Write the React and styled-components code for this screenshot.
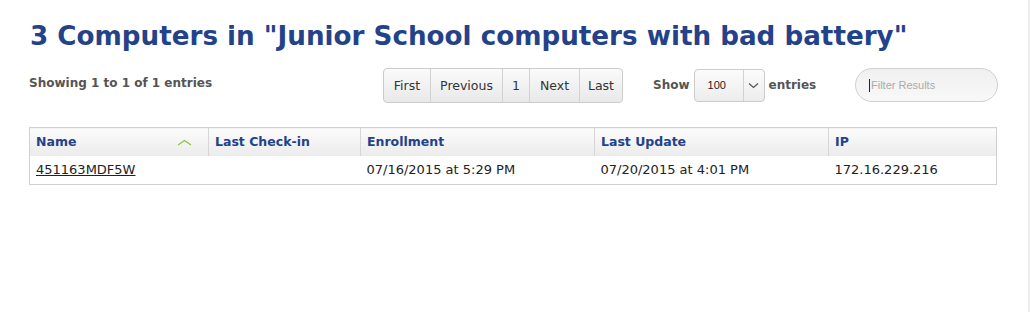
import React from 'react';
import styled, { createGlobalStyle } from 'styled-components';

const GlobalStyle = createGlobalStyle`
  html, body {
    margin: 0;
    padding: 0;
    background: #fff;
  }
  body {
    font-family: "DejaVu Sans", Verdana, sans-serif;
  }
`;

const Page = styled.div`
  box-sizing: border-box;
  width: 1030px;
  height: 312px;
  padding: 19px 30px 0 29px;
  border-right: 2px solid #ececec;
`;

const Title = styled.h1`
  margin: 0 0 0 1px;
  font-size: 26.2px;
  line-height: 34px;
  font-weight: bold;
  color: #24428a;
  white-space: nowrap;
`;

const Toolbar = styled.div`
  display: flex;
  align-items: center;
  margin-top: 15px;
  height: 34px;
`;

const Info = styled.div`
  font-size: 12px;
  font-weight: bold;
  color: #555;
  margin-top: -4px;
  width: 354px;
  white-space: nowrap;
`;

const Pager = styled.div`
  display: flex;
  height: 33px;
  border: 1px solid #ccc;
  border-radius: 4px;
  overflow: hidden;
  background: linear-gradient(#fafafa, #e9e9e9);
`;

const PageButton = styled.button`
  border: none;
  border-left: ${(p) => (p.$first ? 'none' : '1px solid #d2d2d2')};
  background: transparent;
  padding: 0;
  width: ${(p) => p.$w}px;
  font-family: "DejaVu Sans", Verdana, sans-serif;
  font-size: 12.5px;
  color: #333;
  cursor: pointer;
`;

const Label = styled.span`
  font-size: 12px;
  font-weight: bold;
  color: #555;
  margin: ${(p) => p.$m};
`;

const Select = styled.div`
  display: flex;
  height: 33px;
  width: 71px;
  border: 1px solid #ccc;
  border-radius: 4px;
  background: linear-gradient(#fcfcfc, #ececec);
  box-sizing: border-box;
`;

const SelectValue = styled.div`
  flex: 1;
  display: flex;
  align-items: center;
  padding-left: 13px;
  font-family: "Liberation Sans", Arial, sans-serif;
  font-size: 11px;
  color: #222;
`;

const SelectArrow = styled.div`
  width: 20px;
  border-left: 1px solid #d2d2d2;
  display: flex;
  align-items: center;
  justify-content: center;
`;

const Filter = styled.div`
  margin-left: auto;
  width: 143px;
  height: 34px;
  box-sizing: border-box;
  border: 1px solid #d0d0d0;
  border-radius: 17px;
  background: linear-gradient(#f0f0f0, #f8f8f8);
  display: flex;
  align-items: center;
  padding-left: 13px;
  font-family: "Liberation Sans", Arial, sans-serif;
  font-size: 11px;
  color: #aaa;
`;

const Caret = styled.span`
  display: inline-block;
  width: 1px;
  height: 13px;
  background: #222;
  margin-right: 1px;
`;

const Table = styled.table`
  margin-top: 25px;
  width: 968px;
  border-collapse: collapse;
  border: 1px solid #d0d0d0;
`;

const Th = styled.th`
  position: relative;
  text-align: left;
  height: 28px;
  padding: 0 6px;
  font-size: 12.5px;
  font-weight: bold;
  color: #24428a;
  background: linear-gradient(#fcfcfc, #ebebeb);
  border-left: 1px solid #d6d6d6;
  width: ${(p) => p.$w}px;
  box-sizing: border-box;
  &:first-child {
    border-left: none;
  }
`;

const Td = styled.td`
  height: 28px;
  padding: 0 6px;
  font-size: 13px;
  color: #222;
  white-space: nowrap;
`;

const Link = styled.a`
  color: #222;
  text-decoration: underline;
`;

const SortIcon = styled.svg`
  position: absolute;
  right: 16px;
  top: 11px;
`;

const pages = [
  { label: 'First', w: 46 },
  { label: 'Previous', w: 72 },
  { label: '1', w: 27 },
  { label: 'Next', w: 50 },
  { label: 'Last', w: 43 },
];

const columns = [
  { label: 'Name', w: 179 },
  { label: 'Last Check-in', w: 152 },
  { label: 'Enrollment', w: 234 },
  { label: 'Last Update', w: 234 },
  { label: 'IP' },
];

export default function App() {
  return (
    <Page>
      <GlobalStyle />
      <Title>3 Computers in "Junior School computers with bad battery"</Title>
      <Toolbar>
        <Info>Showing 1 to 1 of 1 entries</Info>
        <Pager>
          {pages.map((p, i) => (
            <PageButton key={p.label} $w={p.w} $first={i === 0}>
              {p.label}
            </PageButton>
          ))}
        </Pager>
        <Label $m="0 4px 0 30px">Show</Label>
        <Select>
          <SelectValue>100</SelectValue>
          <SelectArrow>
            <svg width="11" height="7" viewBox="0 0 11 7">
              <path d="M1 1.5 L5.5 5.5 L10 1.5" fill="none" stroke="#555" strokeWidth="1.2" />
            </svg>
          </SelectArrow>
        </Select>
        <Label $m="0 0 0 4px">entries</Label>
        <Filter>
          <Caret />
          Filter Results
        </Filter>
      </Toolbar>
      <Table>
        <thead>
          <tr>
            {columns.map((c, i) => (
              <Th key={c.label} $w={c.w}>
                {c.label}
                {i === 0 && (
                  <SortIcon width="15" height="7" viewBox="0 0 15 7">
                    <path d="M1 6 L7.5 1.5 L14 6" fill="none" stroke="#8cc63f" strokeWidth="1.3" />
                  </SortIcon>
                )}
              </Th>
            ))}
          </tr>
        </thead>
        <tbody>
          <tr>
            <Td><Link href="#">451163MDF5W</Link></Td>
            <Td></Td>
            <Td>07/16/2015 at 5:29 PM</Td>
            <Td>07/20/2015 at 4:01 PM</Td>
            <Td>172.16.229.216</Td>
          </tr>
        </tbody>
      </Table>
    </Page>
  );
}
